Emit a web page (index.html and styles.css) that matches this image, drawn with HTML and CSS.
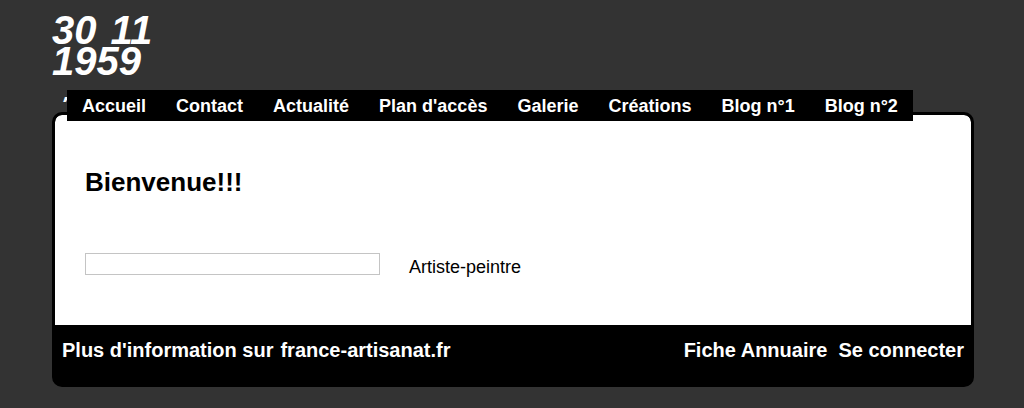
FILE: index.html
```html
<!DOCTYPE html>
<html lang="fr">

<head>
    <meta charset="UTF-8">
    <meta name="viewport" content="width=device-width, initial-scale=1.0">
    <title>30 11 1959 - Artiste-peintre</title>
    <link rel="stylesheet" href="styles.css">
</head>

<body>
    <div class="page">
        <header class="site-header">
            <div class="site-title">30 11<br>1959</div>
        </header>

        <nav class="menu-wrap">
            <span class="menu-ghost">A</span>
            <ul class="menu">
                <li><a href="#">Accueil</a></li>
                <li><a href="#">Contact</a></li>
                <li><a href="#">Actualité</a></li>
                <li><a href="#">Plan d'accès</a></li>
                <li><a href="#">Galerie</a></li>
                <li><a href="#">Créations</a></li>
                <li><a href="#">Blog n°1</a></li>
                <li><a href="#">Blog n°2</a></li>
            </ul>
        </nav>

        <div class="box">
            <main class="content">
                <h1>Bienvenue!!!</h1>
                <div class="intro">
                    <div class="frame"></div>
                    <p class="job">Artiste-peintre</p>
                </div>
            </main>
            <footer class="site-footer">
                <div class="footer-left">
                    <span>Plus d'information sur</span>
                    <a href="#">france-artisanat.fr</a>
                </div>
                <div class="footer-right">
                    <a href="#">Fiche Annuaire</a>
                    <a href="#">Se connecter</a>
                </div>
            </footer>
        </div>
    </div>
</body>

</html>
```

FILE: styles.css
```css
body {
    font-family: "Liberation Sans", Arial, sans-serif;
    margin: 0;
    padding: 0;
    background-color: #333333;
    color: #000;
}

a {
    color: white;
    text-decoration: none;
}

.page {
    width: 922px;
    margin-left: 52px;
}

.site-header {
    padding-top: 15px;
    height: 90px;
    box-sizing: border-box;
}

.site-title {
    color: white;
    font-size: 40px;
    font-weight: bold;
    font-style: italic;
    line-height: 31px;
    word-spacing: 3px;
}

.menu-wrap {
    position: relative;
    z-index: 2;
    margin-bottom: -9px;
}

/* bit of a hidden title peeking behind the menu */
.menu-ghost {
    position: absolute;
    left: 8px;
    top: 5px;
    height: 7px;
    overflow: hidden;
    color: white;
    font-size: 18px;
    font-weight: bold;
    line-height: 18px;
    z-index: -1;
}

.menu {
    display: inline-flex;
    list-style: none;
    margin: 0 0 0 15px;
    padding: 0;
    background-color: #000;
}

.menu a {
    display: block;
    padding: 2px 15px 0;
    font-size: 18px;
    font-weight: bold;
    line-height: 29px;
}

.box {
    border: 3px solid #000;
    border-radius: 10px;
    background-color: #000;
    overflow: hidden;
}

.content {
    height: 210px;
    padding: 0 30px;
    box-sizing: border-box;
    overflow: hidden;
    background-color: white;
    border-radius: 7px 7px 0 0;
}

.content h1 {
    margin: 0;
    padding-top: 51px;
    font-size: 26px;
    line-height: 32px;
}

.intro {
    display: flex;
    align-items: flex-start;
    gap: 29px;
    margin-top: 55px;
}

.frame {
    width: 295px;
    height: 22px;
    border: 1px solid #c4c4c4;
    box-sizing: border-box;
}

.job {
    margin: 2px 0 0;
    font-size: 18px;
    line-height: 24px;
}

.site-footer {
    display: flex;
    justify-content: space-between;
    background-color: #000;
    color: white;
    height: 59px;
    padding: 13px 7px 0;
    box-sizing: border-box;
    font-size: 20px;
    font-weight: bold;
    line-height: 24px;
}

.footer-left,
.footer-right {
    display: flex;
    gap: 7px;
}

.footer-right {
    gap: 11px;
}
```
